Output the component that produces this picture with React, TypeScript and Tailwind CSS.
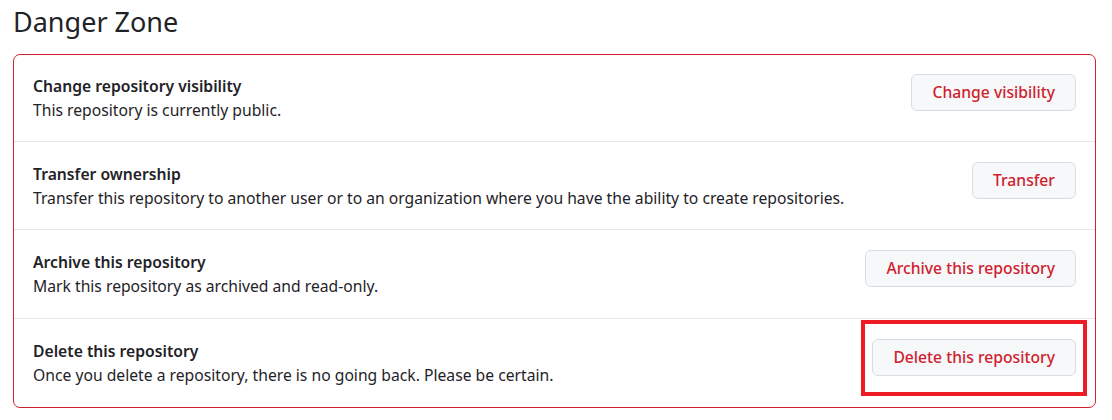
import React from 'react';

interface DangerItem {
  title: string;
  description: string;
  action: string;
  highlighted?: boolean;
}

const items: DangerItem[] = [
  {
    title: 'Change repository visibility',
    description: 'This repository is currently public.',
    action: 'Change visibility',
  },
  {
    title: 'Transfer ownership',
    description:
      'Transfer this repository to another user or to an organization where you have the ability to create repositories.',
    action: 'Transfer',
  },
  {
    title: 'Archive this repository',
    description: 'Mark this repository as archived and read-only.',
    action: 'Archive this repository',
  },
  {
    title: 'Delete this repository',
    description: 'Once you delete a repository, there is no going back. Please be certain.',
    action: 'Delete this repository',
    highlighted: true,
  },
];

const rowPadding = ['pt-[19px] pb-[19px]', 'pt-[20px] pb-[19px]', 'pt-[20px] pb-[20px]', 'pt-[20px] pb-[20px]'];

const App: React.FC = () => {
  return (
    <div className="w-[1112px] h-[420px] bg-white text-[#1f2328] font-['Segoe_UI','Noto_Sans',sans-serif]">
      <div className="pl-[13px] pr-[16px]">
        <h2 className="text-[27px] leading-[44px] font-normal">Danger Zone</h2>
        <div className="mt-[10px] border border-[#cf222e] rounded-[7px]">
          {items.map((item, i) => (
            <div
              key={item.title}
              className={
                'flex items-center justify-between px-[19px] ' +
                rowPadding[i] +
                (i > 0 ? ' border-t border-[#e4e7ea]' : '')
              }
            >
              <div className="text-[15.7px] leading-[24px]">
                <div className="font-semibold">{item.title}</div>
                <div>{item.description}</div>
              </div>
              <div className="relative mb-[11px]">
                <button className="h-[37px] px-[20px] rounded-[6px] border border-[#d8dde2] bg-[#f6f8fa] text-[#cf222e] text-[15.7px] font-medium">
                  {item.action}
                </button>
                {item.highlighted && (
                  <div className="absolute -left-[11px] -right-[11px] -top-[19px] -bottom-[20px] border-4 border-[#ed1c24]" />
                )}
              </div>
            </div>
          ))}
        </div>
      </div>
    </div>
  );
};

export default App;
